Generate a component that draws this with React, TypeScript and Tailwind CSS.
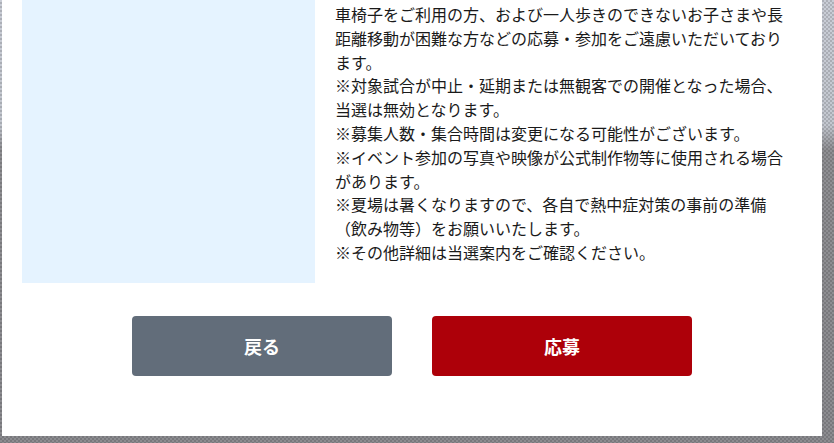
const NOTES = [
  '車椅子をご利用の方、および一人歩きのできないお子さまや長距離移動が困難な方などの応募・参加をご遠慮いただいております。',
  '※対象試合が中止・延期または無観客での開催となった場合、当選は無効となります。',
  '※募集人数・集合時間は変更になる可能性がございます。',
  '※イベント参加の写真や映像が公式制作物等に使用される場合があります。',
  '※夏場は暑くなりますので、各自で熱中症対策の事前の準備（飲み物等）をお願いいたします。',
  '※その他詳細は当選案内をご確認ください。',
];

export default function App() {
  return (
    <div
      className="h-[443px] w-full overflow-hidden bg-[image:conic-gradient(rgba(0,0,0,0.14)_25%,transparent_0_50%,rgba(0,0,0,0.14)_0_75%,transparent_0),linear-gradient(180deg,#c9cdd6_0px,#c3c7cf_125px,#8f8f93_150px,#8c8c90_100%)] [background-size:4px_4px,100%_100%]"
      style={{ fontFamily: '"Noto Sans CJK JP", "Noto Sans", sans-serif' }}
    >
      <div className="ml-[2px] h-[436px] w-[820px] bg-white">
        {/* content row */}
        <div className="flex">
          <div className="ml-[20px] h-[283px] w-[293px] bg-[#e5f3ff]" />
          <div className="ml-[20px] w-[456px] pt-[3px] text-[16px] leading-[23.8px] text-[#1a1a1a]">
            {NOTES.map((n, i) => (
              <p key={i}>{n}</p>
            ))}
          </div>
        </div>

        {/* actions */}
        <div className="mt-[33px] flex justify-center gap-[40px]">
          <button className="h-[60px] w-[260px] rounded-[4px] bg-[#626d7a] text-[18px] font-bold text-white">
            戻る
          </button>
          <button className="h-[60px] w-[260px] rounded-[4px] bg-[#ad0009] text-[18px] font-bold text-white">
            応募
          </button>
        </div>
      </div>
    </div>
  );
}
